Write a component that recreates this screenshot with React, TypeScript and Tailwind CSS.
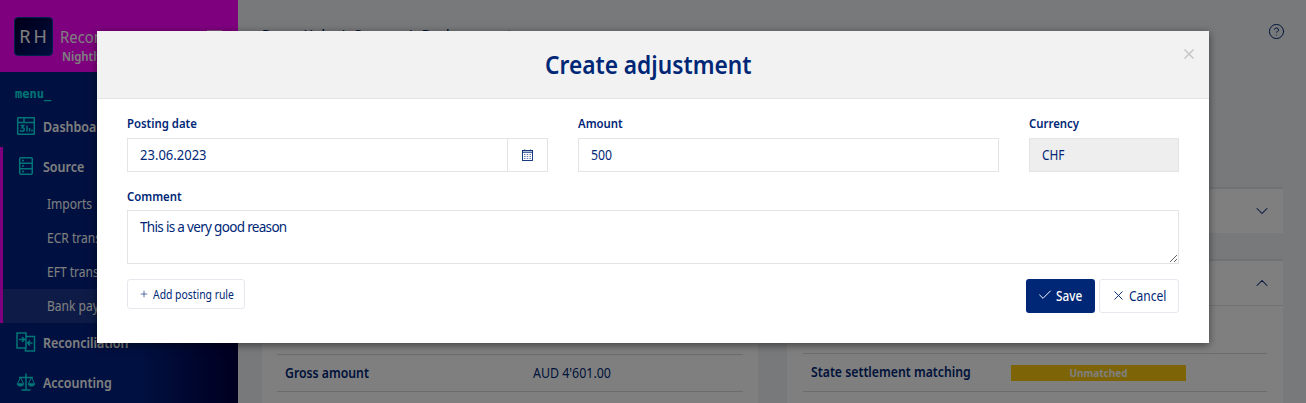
import React from "react";
import { Check, ChevronDown, ChevronUp, CircleHelp, Plus, X } from "lucide-react";

const subItems = ["Imports", "ECR transactions", "EFT transactions", "Bank payments"];

// the app's UI font is a narrower cut of Noto Sans, so text gets squeezed
const Narrow = ({ children, className = "scale-x-[0.875]" }: { children: React.ReactNode; className?: string }) => (
  <span className={`inline-block origin-left whitespace-nowrap ${className}`}>{children}</span>
);

const DashboardIcon = () => (
  <svg width="20" height="20" viewBox="0 0 20 20" fill="none" stroke="currentColor" strokeWidth="1.5">
    <rect x="1.7" y="1.7" width="16.6" height="16.6" rx="0.5" />
    <path d="M1.7 6.5h16.6M8 1.7v4.8" />
    <path d="M4.5 9.5h3.2l-1.6 2.2c1.5 0 2.2.7 2.2 1.6 0 1.2-1 1.9-2.2 1.9-.9 0-1.6-.3-2.1-.9" />
    <path d="M11 9.5v6M13.5 12v3.5M16 13.5v2" />
  </svg>
);

const SourceIcon = () => (
  <svg width="20" height="20" viewBox="0 0 20 20" fill="none" stroke="currentColor" strokeWidth="1.5">
    <rect x="3.7" y="1.7" width="12.6" height="16.6" rx="1" />
    <path d="M3.7 7.2h12.6M3.7 12.8h12.6M6 4.5h2M6 10h2M6 15.5h2" />
  </svg>
);

const ReconciliationIcon = () => (
  <svg width="20" height="20" viewBox="0 0 20 20" fill="none" stroke="currentColor" strokeWidth="1.5">
    <path d="M1 1h9v15H1zM10 4.5h8.500V19H9.500v-3" />
    <path d="M3 7.500h5M6 5l2.500 2.500L6 10M16.500 11h-5M14 8.500 11.500 11l2.500 2.500" />
  </svg>
);

const AccountingIcon = () => (
  <svg width="20" height="20" viewBox="0 0 20 20" fill="none" stroke="currentColor" strokeWidth="1.5">
    <path d="M10 1.500V18M5.500 18h9M3 5.500h14" />
    <path d="M4.500 5.500 1.500 11.500M4.500 5.500l3 6M15.500 5.500l-3 6M15.500 5.500l3 6" strokeWidth="1" />
    <path d="M1 11.500h7c0 1.800-1.500 2.800-3.500 2.800S1 13.300 1 11.500zM12 11.500h7c0 1.800-1.500 2.800-3.500 2.800S12 13.300 12 11.500z" fill="currentColor" strokeWidth="0.5" />
  </svg>
);

const CalendarIcon = () => (
  <svg width="11" height="12" viewBox="0 0 11 12" fill="none" stroke="currentColor">
    <rect x="0.5" y="1.500" width="10" height="10" strokeWidth="0.9" />
    <path d="M0.500 3.200h10" strokeWidth="1" />
    <path d="M2.500 0.500v1M8.500 0.500v1" strokeWidth="0.8" />
    <path d="M2 5.500h7M2 7.500h7M2 9.500h7" strokeDasharray="1.500 1.250" strokeWidth="0.8" opacity="0.75" />
  </svg>
);

const NavRow = ({ icon, label }: { icon: React.ReactNode; label: string }) => (
  <div className="flex h-10 items-center pb-[2px] pl-[16px] text-[15px] font-semibold text-white">
    <span className="mr-[7px] w-[20px] text-[#00e8ec]">{icon}</span>
    <Narrow className="scale-x-[0.83]">{label}</Narrow>
  </div>
);

const Field = ({ label, className, tight, children }: { label: string; className?: string; tight?: boolean; children: React.ReactNode }) => (
  <div className={className}>
    <label className={`block h-[18px] text-[13px] leading-[16px] font-semibold text-[#002776] ${tight ? "mb-[4px]" : "mb-[5px]"}`}>
      <Narrow>{label}</Narrow>
    </label>
    {children}
  </div>
);

const TextInput = ({ value, className, inputClassName }: { value: string; className?: string; inputClassName: string }) => (
  <div className={`flex h-[34px] min-w-0 flex-1 items-center overflow-hidden border border-[#e4e4e4] px-3 pb-[2px] ${className ?? ""}`}>
    <input readOnly value={value} className={`origin-left bg-transparent text-[14px] text-[#002776] outline-none ${inputClassName}`} />
  </div>
);

const StatusRow = ({ label, status, color }: { label?: string; status?: string; color: string }) => (
  <div className="flex h-[38px] items-center border-b border-[#d8d8d8] pl-[8px]">
    <span className="w-[200px] pb-[2px] text-[14px] font-semibold">{label && <Narrow>{label}</Narrow>}</span>
    <span className={`mt-[1px] flex h-[16px] w-[175px] items-center justify-center text-[10px] font-bold text-white ${color}`}>
      {status}
    </span>
  </div>
);

export default function App() {
  return (
    <div className="relative flex h-[403px] w-[1306px] overflow-hidden bg-[#f0f2f5] font-['Noto_Sans',sans-serif] text-[#002776]">
      {/* Sidebar */}
      <aside className="flex h-full w-[238px] shrink-0 flex-col bg-gradient-to-r from-[#002080] from-60% to-[#000040]">
        <div className="flex h-[72px] shrink-0 items-center gap-[7px] bg-[#ff00ff] pl-[14px]">
          <div className="flex h-[39px] w-[39px] items-center justify-center rounded-[4px] border border-[#0040a0] bg-gradient-to-br from-[#000030] to-[#002080] pl-[2px] text-[18px] tracking-[3px] text-white">
            RH
          </div>
          <div className="relative mt-[18px] w-[150px] text-white">
            <div className="text-[17px] leading-[22px]">
              <Narrow>Reconciliation</Narrow>
            </div>
            <div className="pl-[2px] text-[13px] leading-[16px] font-semibold">
              <Narrow>Nightly</Narrow>
            </div>
            <span className="absolute top-[4px] right-[-12px] h-[2px] w-[15px] bg-white/70" />
          </div>
        </div>
        <div className="mt-[14px] pl-[15px] font-['DejaVu_Sans_Mono',monospace] text-[12px] leading-[16px] font-bold text-[#00e8ec]">
          menu_
        </div>
        <div className="mt-[5px]">
          <NavRow icon={<DashboardIcon />} label="Dashboard" />
        </div>
        <div className="border-l-[3px] border-[#ff00ff]">
          <div className="-ml-[3px]">
            <NavRow icon={<SourceIcon />} label="Source" />
          </div>
          {subItems.map((item, i) => (
            <div
              key={item}
              className={`flex h-[34px] items-center pb-[2px] pl-[44px] text-[14px] text-white ${i === 3 ? "bg-white/10" : ""}`}
            >
              <Narrow className="scale-x-[0.86]">{item}</Narrow>
            </div>
          ))}
        </div>
        <NavRow icon={<ReconciliationIcon />} label="Reconciliation" />
        <NavRow icon={<AccountingIcon />} label="Accounting" />
      </aside>

      {/* Page content */}
      <main className="min-w-0 flex-1 px-[24px]">
        <div className="flex h-[187px] items-start justify-between pt-[25px]">
          <div className="flex gap-[10px] text-[13px] leading-[18px] font-medium">
            <span>Recon Hub</span>
            <span>/</span>
            <span>Source</span>
            <span>/</span>
            <span>Bank payments</span>
          </div>
          <CircleHelp size={17} strokeWidth={1.4} className="mt-[-2px] mr-[-3px]" />
        </div>
        <div className="ml-[525px] flex h-[46px] w-[496px] items-center justify-end border-t-2 border-[#e2e4e6] bg-white pr-[11px]">
          <ChevronDown size={20} strokeWidth={1.25} />
        </div>
        <div className="mt-[26px] grid grid-cols-[496px_496px] gap-[29px]">
          <div className="bg-white px-[15px] pt-[95px]">
            <div className="flex h-[38px] items-center border-y border-[#d8d8d8] pb-[2px] pl-[8px] text-[14px]">
              <span className="w-[248px] font-semibold">
                <Narrow>Gross amount</Narrow>
              </span>
              <Narrow className="scale-x-[0.885]">AUD 4'601.00</Narrow>
            </div>
          </div>
          <div className="bg-white">
            <div className="flex h-[47px] items-center justify-end border-t-2 border-b border-[#e2e4e6] pr-[11px]">
              <ChevronUp size={20} strokeWidth={1.25} />
            </div>
            <div className="px-[16px] pt-[10px]">
              <StatusRow color="bg-[#145020]" />
              <StatusRow label="State settlement matching" status="Unmatched" color="bg-[#f9c80e]" />
              <StatusRow color="bg-[#555555]" />
            </div>
          </div>
        </div>
      </main>

      {/* Modal backdrop */}
      <div className="absolute inset-0 bg-black/50" />

      {/* Modal */}
      <div className="absolute top-[31px] left-[97px] w-[1112px] bg-white shadow-[0_2px_8px_rgba(0,0,0,0.5)]">
        <div className="relative flex h-[68px] items-center justify-center border-b border-[#e5e5e5] bg-[#f2f2f2] pr-[10px]">
          <h2 className="scale-x-[0.873] text-[26px] font-semibold text-[#002776]">Create adjustment</h2>
          <X size={16} strokeWidth={2.5} className="absolute top-[15px] right-[12px] text-[#c8c8c8]" />
        </div>
        <div className="px-[30px] pt-[16px] pb-[30px]">
          <div className="grid grid-cols-[421px_421px_150px] gap-x-[30px]">
            <Field label="Posting date">
              <div className="flex">
                <TextInput value="23.06.2023" inputClassName="w-[107%] scale-x-[0.93]" />
                <span className="flex h-[34px] w-[40px] shrink-0 items-center justify-center border border-l-0 border-[#e4e4e4]">
                  <CalendarIcon />
                </span>
              </div>
            </Field>
            <Field label="Amount">
              <TextInput value="500" inputClassName="w-[114%] scale-x-[0.875]" />
            </Field>
            <Field label="Currency">
              <TextInput value="CHF" className="bg-[#eeeeee]" inputClassName="w-[114%] scale-x-[0.85]" />
            </Field>
          </div>
          <Field label="Comment" tight className="mt-[16px]">
            <textarea
              readOnly
              defaultValue="This is a very good reason"
              className="block h-[54px] w-full border border-[#e4e4e4] px-3 py-[6px] text-[13.5px] leading-[20px] tracking-[-0.68px] text-[#002776] outline-none"
            />
          </Field>
          <div className="mt-[15px] flex items-start justify-between">
            <button className="flex h-[30px] w-[118px] items-center gap-[4px] overflow-hidden rounded-[3px] border border-[#e6e8ee] bg-white pt-[2px] pl-[11px] text-[12px] text-[#002776]">
              <Plus size={10} strokeWidth={1.5} className="-mt-[3px] shrink-0" />
              <Narrow className="scale-x-[0.865]">Add posting rule</Narrow>
            </button>
            <div className="flex gap-[4px]">
              <button className="flex h-[34px] w-[69px] items-center gap-[3px] overflow-hidden rounded-[3px] bg-[#002776] pb-[2px] pl-[11px] text-[14px] font-medium text-white">
                <Check size={16} strokeWidth={1.5} className="shrink-0" />
                <Narrow className="scale-x-[0.84]">Save</Narrow>
              </button>
              <button className="flex h-[34px] w-[80px] items-center gap-[3px] overflow-hidden rounded-[3px] border border-[#e6e8ee] bg-white pb-[2px] pl-[11px] text-[14px] text-[#002776]">
                <X size={15} strokeWidth={1.5} className="shrink-0" />
                <Narrow className="scale-x-[0.86]">Cancel</Narrow>
              </button>
            </div>
          </div>
        </div>
      </div>
    </div>
  );
}
